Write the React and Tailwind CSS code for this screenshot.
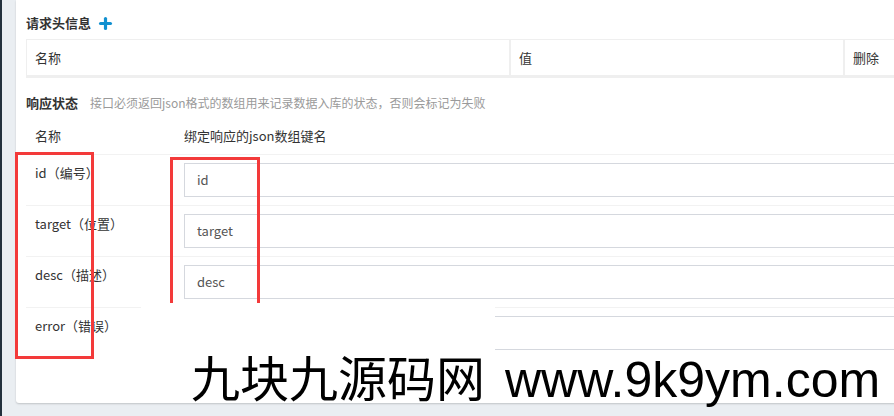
import { Plus } from "lucide-react";

const rows = [
  { label: "id（编号）", key: "id" },
  { label: "target（位置）", key: "target" },
  { label: "desc（描述）", key: "desc" },
  { label: "error（错误）", key: "" },
];

export default function App() {
  return (
    <div
      className="relative flex h-[416px] w-[894px] overflow-hidden bg-[#eaeef2] text-[13px] text-[#333]"
      style={{ fontFamily: '"Noto Sans CJK SC", "Liberation Sans", sans-serif' }}
    >
      <div className="h-full w-[2px] shrink-0 bg-[#23313d]" />
      <div className="min-w-0 flex-1 pl-[14px] pb-[13px]">
        <div className="h-full w-[1000px] rounded-bl-[3px] bg-white pl-[10px] pt-[14px] shadow-[0_1px_2px_rgba(0,0,0,0.18)]">
          {/* 请求头信息 */}
          <div className="flex items-center gap-[6px] text-[13px] font-bold leading-[18px] text-[#333]">
            请求头信息
            <Plus className="h-[17px] w-[17px] text-[#1190d0]" strokeWidth={4.5} />
          </div>
          <div className="mt-[7px] flex border border-b-[3px] border-[#efefef] leading-[35px]">
            <div className="w-[484px] border-r-2 border-[#efefef] px-[8px]">名称</div>
            <div className="w-[334px] border-r-2 border-[#efefef] px-[8px]">值</div>
            <div className="flex-1 px-[8px]">删除</div>
          </div>

          {/* 响应状态 */}
          <div className="mt-[16px] flex items-center leading-[18px]">
            <span className="font-bold">响应状态</span>
            <span className="ml-[12px] text-[12px] text-[#9a9a9a]">
              接口必须返回json格式的数组用来记录数据入库的状态，否则会标记为失败
            </span>
          </div>
          <div className="flex border-b border-[#f2f2f2] pt-[15px] pb-[9px] leading-[18px]">
            <div className="w-[158px] pl-[9px]">名称</div>
            <div>绑定响应的json数组键名</div>
          </div>
          {rows.map((r) => (
            <div key={r.label} className="flex h-[51px] border-b border-[#f2f2f2] last:border-b-0">
              <div className="w-[158px] pl-[9px] pt-[9px] leading-[18px]">{r.label}</div>
              <div className="flex-1 pt-[8px]">
                <div className="h-[34px] border border-[#d5d8de] px-[12px] leading-[32px] text-[#555]">
                  {r.key}
                </div>
              </div>
            </div>
          ))}
        </div>
      </div>

      {/* annotation */}
      <div className="absolute left-[170px] top-[157px] h-[160px] w-[90px] border-[3px] border-[#f33a3a]" />
      <div className="absolute left-[141px] top-[303px] h-[100px] w-[354px] bg-white" />
      <div className="absolute left-[495px] right-0 top-[351px] h-[52px] bg-white" />
      <div className="absolute left-[15px] top-[152px] h-[207px] w-[79px] border-[3px] border-[#f33a3a]" />
      <div className="absolute left-[191px] top-[351px] flex items-baseline whitespace-nowrap leading-[49px] text-black">
        <span className="text-[49px]">九块九源码网</span>
        <span className="ml-[20px] text-[50px]" style={{ fontFamily: '"Liberation Sans", sans-serif' }}>
          www.9k9ym.com
        </span>
      </div>
    </div>
  );
}
